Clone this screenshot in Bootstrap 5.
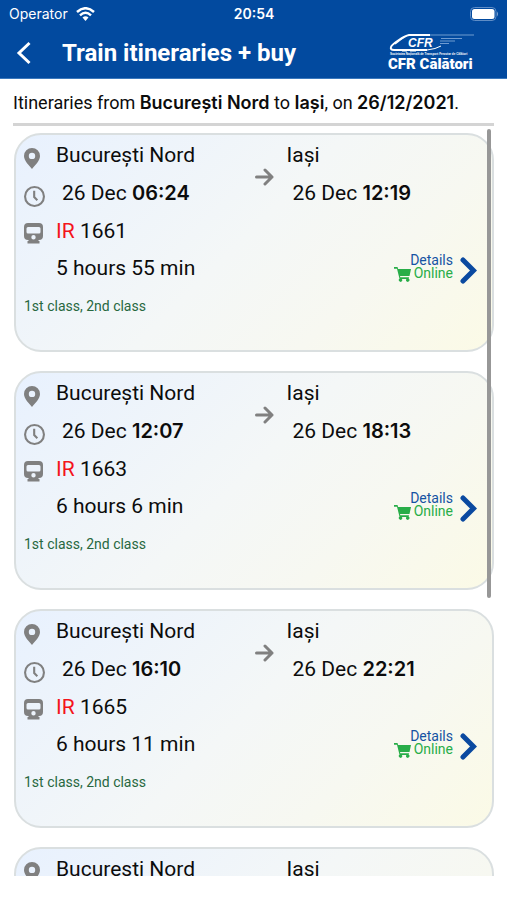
<!DOCTYPE html>
<html lang="en">
<head>
<meta charset="utf-8">
<meta name="viewport" content="width=device-width, initial-scale=1">
<title>Train itineraries + buy</title>
<link href="https://cdn.jsdelivr.net/npm/bootstrap@5.3.0/dist/css/bootstrap.min.css" rel="stylesheet">
<style>
body { font-family: Roboto, "Liberation Sans", sans-serif; color: #0c0c0c; background: #fff; }
.cfr-head { flex: none; background: #024a9f; color: #fff; border-bottom: 1px solid #3a78bd; }
.status { height: 27px; padding: 0 8px 0 9px; font-family: Inter, Roboto, sans-serif; font-size: 14px; }
.status .side { flex: 1 1 0; }
.status .clock { font-weight: 600; }
.titlebar { height: 51px; padding: 0 32px 0 12px; }
.titlebar h1 { font-size: 24px; font-weight: 700; line-height: 28px; }
.back { width: 24px; height: 32px; margin-right: 26px; }
.brand-word { font: 900 15px Roboto, sans-serif; }
.summary { flex: none; margin: 0 13px; height: 47px; padding-top: 3px; border-bottom: 3px solid #d4d4d4; font-size: 18px; white-space: nowrap; }
.summary b { font-family: Inter, Roboto, sans-serif; font-weight: 600; }
.trips { margin-bottom: 24px; min-height: 0; }
.trip-list { padding: 7px 13px 0 14px; scrollbar-width: none; }
.trip-list::-webkit-scrollbar { display: none; }
.trip { display: grid; grid-template-columns: 32px 199fr 32px 206fr; grid-template-rows: 38px 38px 37px 38px 38px; align-items: center;
  height: 219px; padding: 1px 0 0 8px; margin-bottom: 19px; border: 2px solid #dadfe0; border-radius: 27px; font-size: 21px; line-height: 24px;
  background: linear-gradient(135deg, #e8f1fe 0%, #f4f7f7 48%, #f7f8f1 72%, #fbfae6 100%); }
.trip svg, .cfr-head svg { display: block; }
.trip time { padding-left: 6px; }
.trip time b { font-family: Inter, Roboto, sans-serif; font-weight: 600; font-size: 20px; }
.glyph { color: #808080; padding-top: 6px; }
.span-rows { grid-area: 1 / 3 / 3 / 4; }
.cell-text { grid-column: 2; }
.dest { grid-column: 4; }
.kind { color: #f4141c; }
.more { grid-area: 4 / 4; color: #1553a3; font-size: 14px; line-height: 13px; gap: 7px; padding: 4px 15px 0 0; }
.more .text-end { padding-bottom: 4px; }
.online { color: #28ad48; gap: 3px; }
.classes { grid-column: 1 / -1; font-size: 14px; color: #28683f; }
.thumb { top: 3px; right: 16px; width: 4px; height: 469px; background: #979797; border-radius: 2px; }
</style>
<script src="https://cdn.jsdelivr.net/npm/bootstrap@5.3.0/dist/js/bootstrap.bundle.min.js"></script>
</head>
<body class="d-flex flex-column vh-100 overflow-hidden">
<svg class="d-none" xmlns="http://www.w3.org/2000/svg">
  <symbol id="pin" viewBox="0 0 16 21"><path fill="currentColor" fill-rule="evenodd" d="M8 0a8 8 0 0 0-8 8c0 5 5 9 8 13 3-4 8-8 8-13a8 8 0 0 0-8-8zm0 4.700a3.200 3.200 0 1 1 0 6.400 3.200 3.200 0 0 1 0-6.400z"/></symbol>
  <symbol id="clock" viewBox="0 0 20 20"><circle cx="10" cy="10" r="9" fill="none" stroke="currentColor" stroke-width="2"/><path d="M9.700 4.500v6l3 3" fill="none" stroke="currentColor" stroke-width="2"/></symbol>
  <symbol id="train" viewBox="0 0 19 21"><path fill="currentColor" fill-rule="evenodd" d="M4 0h11q4 0 4 4v9q0 4-4 4l-1 1h1.500v2.500h-12V18H5l-1-1q-4 0-4-4V4q0-4 4-4zM4 4Q2.500 4 2.500 5.500V9q0 1.500 1.500 1.500h11q1.500 0 1.500-1.500V5.500Q16.500 4 15 4zM9.500 12a2.200 2.200 0 1 0 0 4.400 2.200 2.200 0 0 0 0-4.400z"/></symbol>
  <symbol id="arrow" viewBox="0 0 19 18"><path d="M1.500 9H17M10 2l7 7-7 7" fill="none" stroke="currentColor" stroke-width="3" stroke-linecap="round" stroke-linejoin="round"/></symbol>
  <symbol id="cart" viewBox="0 0 17 15"><path fill="currentColor" d="M0 0h3.500l.6 2H17l-1.500 7H6l.3 1.300h8.700l-.3 1.400a1.700 1.700 0 1 1-2.200.3H7.800a1.700 1.700 0 1 1-2.300-.3L3 1.700H0z"/></symbol>
  <symbol id="next" viewBox="0 0 17 27"><path d="M3 3l10.500 10.500L3 24" fill="none" stroke="#0a49a0" stroke-width="5" stroke-linecap="round"/></symbol>
</svg>

<header class="cfr-head">
  <div class="status d-flex align-items-center">
    <div class="side d-flex align-items-center gap-2"><span>Operator</span>
      <svg width="19" height="14" viewBox="0 0 19 14" aria-hidden="true"><path d="M1 5q8.500-7.500 17 0M4 8.300q5.500-5 11 0" fill="none" stroke="#fff" stroke-width="2.500"/><path d="M6.500 10.600q3-2.600 6 0L9.500 14z" fill="#fff"/></svg>
    </div>
    <span class="clock">20:54</span>
    <div class="side d-flex justify-content-end">
      <svg width="29" height="14" viewBox="0 0 29 14" aria-hidden="true"><rect x=".5" y=".5" width="25.500" height="13" rx="4" fill="none" stroke="#5f8dc6"/><rect x="2" y="2" width="22.500" height="10" rx="2.500" fill="#fff"/><path d="M27 4.500q2 2.500 0 5z" fill="#7fa3d0"/></svg>
    </div>
  </div>
  <div class="titlebar d-flex align-items-center">
    <button type="button" class="back btn p-0 border-0" aria-label="Back"><svg width="24" height="26" viewBox="0 0 24 26"><path d="M17.500 3L7 13l10.500 10" fill="none" stroke="#fff" stroke-width="3"/></svg></button>
    <h1 class="m-0">Train itineraries + buy</h1>
    <svg class="ms-auto" width="88" height="44" viewBox="0 0 88 44" role="img" aria-label="CFR Călători">
      <path d="M43 4H22C17 5 5 13 4 16q-1 3 3 3h33" fill="none" stroke="#fff" stroke-width="2"/>
      <path d="M8 13l9-7" stroke="#fff" stroke-width="1.500"/>
      <path d="M15 19.500h5m3 0h6" stroke="#fff" stroke-width="2"/>
      <path d="M40 19q9-1 14-4" fill="none" stroke="#fff"/>
      <path d="M43 4h44M54 7.500h21M53 10h15M53 12.500h9" stroke="#6f9bd0" stroke-width="1.200"/>
      <text x="21" y="16" fill="#fff" font-family="Liberation Sans" font-style="italic" font-weight="700" font-size="12">CFR</text>
      <text x="3" y="24" fill="#fff" font-family="Liberation Sans" font-weight="700" font-size="3">Societatea Națională de Transport Feroviar de Călători</text>
      <text x="1" y="38" fill="#fff" class="brand-word">CFR Călători</text>
    </svg>
  </div>
</header>

<p class="summary mb-0 d-flex align-items-center"><span>Itineraries from <b>București Nord</b> to <b>Iași</b>, on <b>26/12/2021</b>.</span></p>

<main class="trips position-relative flex-grow-1">
  <div class="trip-list h-100 overflow-auto" id="trips"></div>
  <div class="thumb position-absolute"></div>
</main>

<template id="trip">
  <article class="trip">
    <span class="glyph"><svg width="16" height="21"><use href="#pin"/></svg></span>
    <span>București Nord</span>
    <span class="glyph span-rows"><svg width="19" height="18"><use href="#arrow"/></svg></span>
    <span class="dest">Iași</span>
    <span class="glyph"><svg width="21" height="21"><use href="#clock"/></svg></span>
    <time>26 Dec <b class="dep"></b></time>
    <time class="dest">26 Dec <b class="arr"></b></time>
    <span class="glyph"><svg width="19" height="21"><use href="#train"/></svg></span>
    <span class="cell-text"><span class="kind">IR</span> <span class="num"></span></span>
    <span class="dur cell-text"></span>
    <a href="#" class="more d-flex justify-content-end align-items-center text-decoration-none">
      <span class="text-end"><span class="d-block">Details</span><span class="online d-flex align-items-start"><svg width="17" height="15"><use href="#cart"/></svg>Online</span></span>
      <svg width="17" height="27"><use href="#next"/></svg>
    </a>
    <span class="classes">1st class, 2nd class</span>
  </article>
</template>
<script>
const list = document.getElementById('trips');
const tpl = document.getElementById('trip');
[['06:24', '12:19', '1661', '5 hours 55 min'],
 ['12:07', '18:13', '1663', '6 hours 6 min'],
 ['16:10', '22:21', '1665', '6 hours 11 min'],
 null].forEach(row => {
  const n = tpl.content.cloneNode(true);
  if (row) {
    ['.dep', '.arr', '.num', '.dur'].forEach((s, i) => { n.querySelector(s).textContent = row[i]; });
  } else {
    n.querySelectorAll('time, .kind, .more, .classes').forEach(e => e.remove());
  }
  list.append(n);
});
</script>
</body>
</html>
